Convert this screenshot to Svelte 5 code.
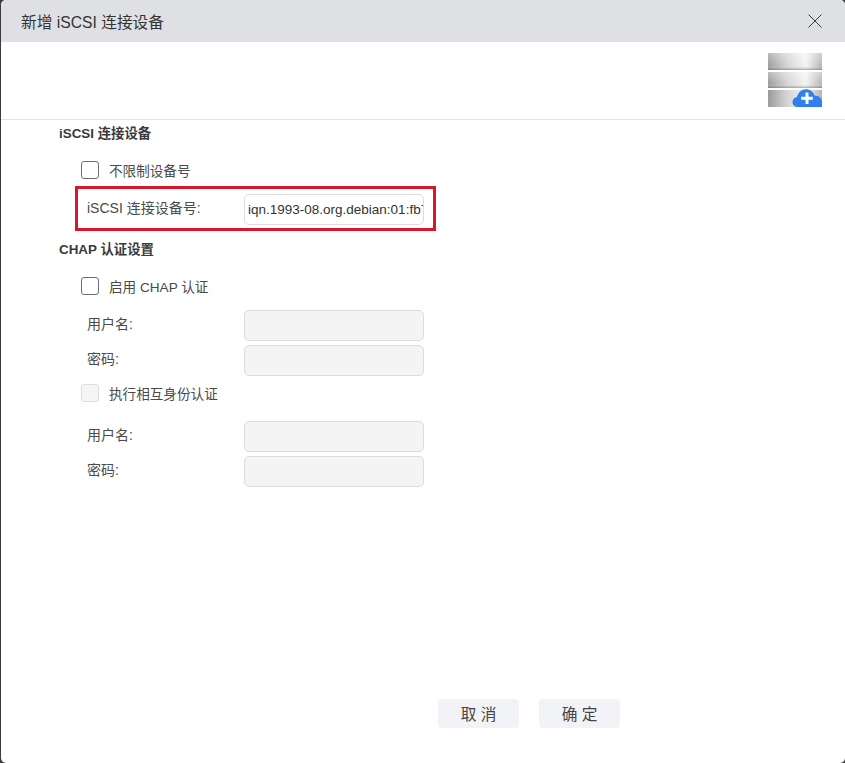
<script>
  const chapFields = ['用户名:', '密码:'];
</script>

<div class="dialog">
  <header class="title-bar">
    <span class="title">新增 iSCSI 连接设备</span>
    <button class="close" aria-label="关闭">
      <svg width="16" height="16" viewBox="0 0 16 16"><path d="M1.5 1.5 14.500 14.500M14.500 1.500 1.500 14.500" stroke="#3a3a3a" stroke-width="1" fill="none" /></svg>
    </button>
  </header>

  <div class="banner">
    <svg class="logo" width="54" height="54" viewBox="0 0 54 54">
      <defs>
        <linearGradient id="disk" x1="0" y1="0" x2="1" y2="0">
          <stop offset="0" stop-color="#9a9a9a" />
          <stop offset="0.35" stop-color="#d4d4d4" />
          <stop offset="0.7" stop-color="#f4f4f4" />
          <stop offset="1" stop-color="#b4b4b4" />
        </linearGradient>
        <linearGradient id="shade" x1="0" y1="0" x2="0" y2="1">
          <stop offset="0" stop-color="#fff" stop-opacity="0.35" />
          <stop offset="0.75" stop-color="#fff" stop-opacity="0" />
          <stop offset="1" stop-color="#555" stop-opacity="0.5" />
        </linearGradient>
      </defs>
      <rect width="54" height="17" fill="url(#disk)" />
      <rect width="54" height="17" fill="url(#shade)" />
      <rect y="19" width="54" height="16" fill="url(#disk)" />
      <rect y="19" width="54" height="16" fill="url(#shade)" />
      <rect y="37" width="54" height="17" fill="url(#disk)" />
      <path d="M30 54c-4 0-5.500-2.600-5.500-5 0-2.900 2-4.800 4.500-5 1-4.500 4.500-7.800 9-7.800 4.200 0 7.400 2.600 8.500 6.400 4.200.2 7.500 2.600 7.500 6.400V54Z" fill="#2f80ee" />
      <path d="M39 39.500v11.500M33.200 45.200h11.600" stroke="#fff" stroke-width="3" fill="none" />
    </svg>
  </div>

  <main class="form">
    <h3>iSCSI 连接设备</h3>
    <label class="check first"><input type="checkbox" /><span>不限制设备号</span></label>

    <div class="highlight">
      <span class="label">iSCSI 连接设备号:</span>
      <input class="text" type="text" value="iqn.1993-08.org.debian:01:fb7a3c9e12d4" />
    </div>

    <h3 class="chap">CHAP 认证设置</h3>
    <label class="check first"><input type="checkbox" /><span>启用 CHAP 认证</span></label>

    <div class="fields top">
      {#each chapFields as name}
        <div class="row">
          <span class="label">{name}</span>
          <input class="text" type="text" disabled />
        </div>
      {/each}
    </div>

    <label class="check mutual"><input type="checkbox" disabled /><span>执行相互身份认证</span></label>

    <div class="fields lower">
      {#each chapFields as name}
        <div class="row">
          <span class="label">{name}</span>
          <input class="text" type="text" disabled />
        </div>
      {/each}
    </div>
  </main>

  <footer class="actions">
    <button class="btn">取 消</button>
    <button class="btn">确 定</button>
  </footer>
</div>

<style>
  :global(body) {
    background: #3c3c3c;
    overflow: hidden;
  }

  .dialog {
    width: 844px;
    margin-left: 1px;
    height: 763px;
    display: flex;
    flex-direction: column;
    background: #fff;
    border-radius: 5px;
    overflow: hidden;
    font-family: "Liberation Sans", "Noto Sans CJK SC", sans-serif;
    font-size: 14px;
    color: #4a4a4a;
  }

  .title-bar {
    height: 42px;
    flex: none;
    display: flex;
    align-items: center;
    justify-content: space-between;
    background: #dfe0e3;
    padding: 0 22px 0 20px;
  }

  .title {
    font-size: 15.7px;
    color: #333;
  }

  .close {
    border: none;
    background: none;
    padding: 0;
    width: 16px;
    height: 16px;
    display: block;
  }

  .close svg {
    display: block;
  }

  .banner {
    height: 66px;
    flex: none;
    border-bottom: 1px solid #e3e3e3;
    display: flex;
    justify-content: flex-end;
    padding: 11px 23px 0 0;
  }

  .logo {
    display: block;
  }

  .form {
    flex: 1;
    padding-left: 58px;
  }

  h3 {
    margin: 6px 0 0;
    font-size: 13.4px;
    line-height: 16px;
    font-weight: bold;
    color: #3a3a3a;
  }

  h3.chap {
    margin-top: 11px;
  }

  .check {
    display: flex;
    align-items: center;
    margin-left: 22px;
    height: 18px;
    font-size: 13.6px;
  }

  .check.first {
    margin-top: 19px;
  }

  .check.mutual {
    margin-top: 8px;
  }

  .check input {
    appearance: none;
    width: 18px;
    height: 18px;
    margin: 0 10px 0 0;
    border: 1px solid #6e6e6e;
    border-radius: 3px;
    background: #fff;
  }

  .check input:disabled {
    border-color: #dedede;
    background: #f5f5f5;
  }

  .highlight {
    width: 361px;
    height: 45px;
    box-sizing: border-box;
    margin: 7px 0 0 16px;
    border: 3px solid #d7182a;
    padding: 2px 0 0 9px;
    display: flex;
    align-items: center;
  }

  .label {
    display: block;
    width: 157px;
    flex: none;
    padding-bottom: 5px;
  }

  .row {
    display: flex;
    align-items: center;
    margin: 0 0 4px 28px;
  }

  .fields.top {
    margin-top: 15px;
  }

  .fields.lower {
    margin-top: 19px;
  }

  .text {
    width: 180px;
    height: 31px;
    box-sizing: border-box;
    border: 1px solid #dcdcdc;
    border-radius: 5px;
    padding: 0 0 0 3px;
    margin: 0;
    outline: none;
    font: inherit;
    font-size: 13.5px;
    color: #333;
    background: #fff;
  }

  .text:disabled {
    background: #f4f4f4;
  }

  .actions {
    flex: none;
    display: flex;
    gap: 20px;
    padding: 0 0 35px 437px;
  }

  .btn {
    width: 81px;
    height: 29px;
    border: none;
    border-radius: 4px;
    background: #f2f3f7;
    font: inherit;
    font-size: 15.7px;
    color: #444;
    padding: 0;
  }
</style>
